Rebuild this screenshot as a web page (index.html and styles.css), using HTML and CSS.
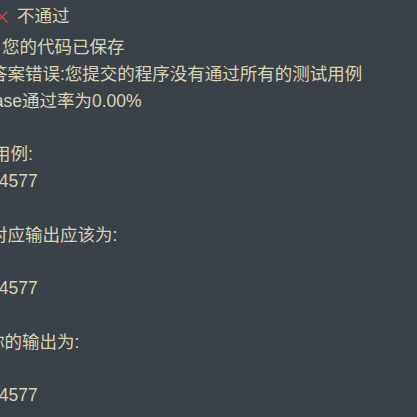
FILE: index.html
```html
<!DOCTYPE html>
<html lang="zh-CN">
<head>
<meta charset="utf-8">
<link rel="stylesheet" href="styles.css">
</head>
<body>
<div class="result">
  <div class="status">
    <svg class="fail-icon" width="14" height="14" viewBox="0 0 14 14"><path d="M1.5 1.5 L12.5 12.5 M12.5 1.5 L1.5 12.5" stroke="#c9453d" stroke-width="1.4" fill="none"/></svg>
    <span class="status-text">不通过</span>
  </div>
  <div class="output">
    <div class="line l-saved">您的代码已保存</div>
    <div class="line l-wrong">答案错误:您提交的程序没有通过所有的测试用例</div>
    <div class="line l-rate">case通过率为0.00%</div>
    <div class="line blank"></div>
    <div class="line l-case">测试用例:</div>
    <div class="line l-num">14577</div>
    <div class="line blank"></div>
    <div class="line l-expect">对应输出应该为:</div>
    <div class="line blank"></div>
    <div class="line l-num">14577</div>
    <div class="line blank"></div>
    <div class="line l-yours">你的输出为:</div>
    <div class="line blank"></div>
    <div class="line l-num">14577</div>
  </div>
</div>
</body>
</html>
```

FILE: styles.css
```css
html, body {
  margin: 0;
  padding: 0;
  background: #3b4149;
  overflow: hidden;
}
body {
  width: 417px;
  height: 417px;
  font-family: "Liberation Sans", "Noto Sans CJK SC", sans-serif;
  font-size: 17.5px;
  color: #d7d3b3;
}
.result {
  padding-top: 3px;
}
.status {
  display: flex;
  align-items: center;
  height: 27px;
  margin-bottom: 4px;
  margin-left: -5px;
}
.fail-icon {
  flex: none;
  margin-right: 8px;
}
.status-text {
  line-height: 27px;
}
.output {
  margin-left: -10px;
}
.line {
  line-height: 26.8px;
  height: 26.8px;
  white-space: nowrap;
}
.l-saved { margin-left: 12px; }
.l-rate { margin-left: -5px; }
.l-case { margin-left: -32px; }
.l-num { margin-left: -1px; }
.l-expect { margin-left: 0; }
.l-yours { margin-left: -3px; }
```
